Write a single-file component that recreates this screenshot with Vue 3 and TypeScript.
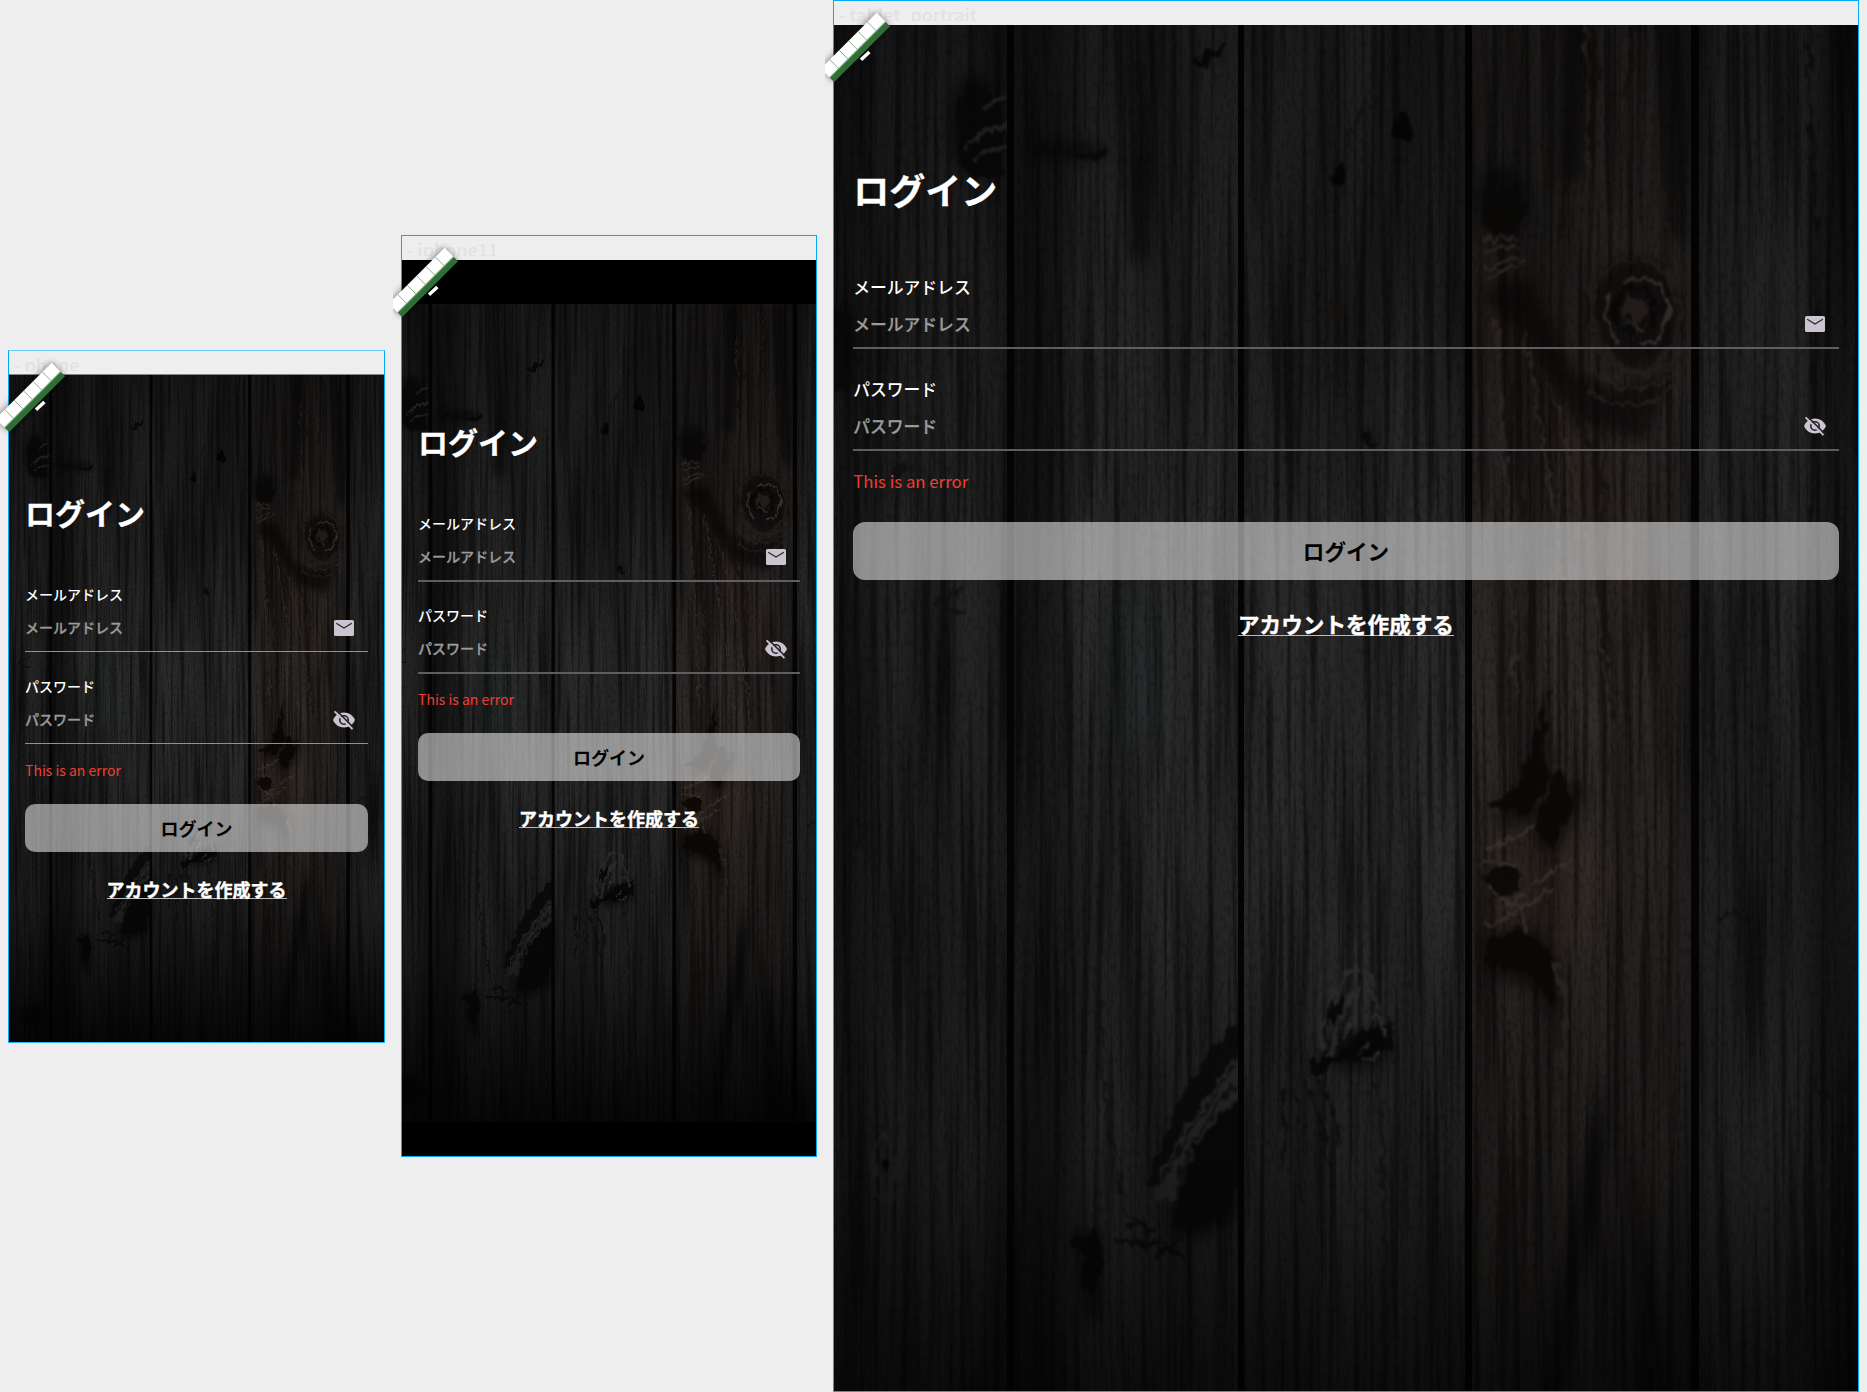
<script setup lang="ts">
interface Device {
  id: string
  name: string
}

const devices: Device[] = [
  { id: 'phone', name: 'phone' },
  { id: 'iphone11', name: 'iphone11' },
  { id: 'tablet', name: 'tablet_portrait' },
]
</script>

<template>
  <main class="board">
    <section v-for="d in devices" :key="d.id" class="frame" :class="d.id">
      <header class="caption"><span>- {{ d.name }}</span></header>

      <div class="safe-area">
        <div class="screen">
          <svg class="wood" viewBox="0 0 1024 1536" preserveAspectRatio="xMidYMid slice" aria-hidden="true">
            <defs>
              <filter :id="'fine-' + d.id" x="0" y="0" width="100%" height="100%" color-interpolation-filters="sRGB">
                <feTurbulence type="fractalNoise" baseFrequency="0.15 0.0035" numOctaves="3" seed="7" />
                <feColorMatrix values="0 0 0 0 0  0 0 0 0 0  0 0 0 0 0  -3.6 0 0 0 2.05" />
              </filter>
              <filter :id="'broad-' + d.id" x="0" y="0" width="100%" height="100%" color-interpolation-filters="sRGB">
                <feTurbulence type="fractalNoise" baseFrequency="0.018 0.0018" numOctaves="2" seed="21" />
                <feColorMatrix values="0 0 0 0 0  0 0 0 0 0  0 0 0 0 0  0 -3 0 0 1.8" />
              </filter>
              <filter :id="'speck-' + d.id" x="0" y="0" width="100%" height="100%" color-interpolation-filters="sRGB">
                <feTurbulence type="fractalNoise" baseFrequency="0.3 0.12" numOctaves="2" seed="3" />
                <feColorMatrix values="0 0 0 0 0  0 0 0 0 0  0 0 0 0 0  -3 0 0 0 1.6" />
              </filter>
              <filter :id="'rough-' + d.id" x="-5%" y="-5%" width="110%" height="110%" color-interpolation-filters="sRGB">
                <feTurbulence type="fractalNoise" baseFrequency="0.11 0.05" numOctaves="4" seed="4" result="n" />
                <feDisplacementMap in="SourceGraphic" in2="n" scale="17" xChannelSelector="R" yChannelSelector="G" />
                <feGaussianBlur stdDeviation="1.2" />
              </filter>
              <filter :id="'haze-' + d.id" x="-20%" y="-20%" width="140%" height="140%" color-interpolation-filters="sRGB">
                <feGaussianBlur stdDeviation="7" />
              </filter>
              <filter :id="'soft-' + d.id" x="-20%" y="-20%" width="140%" height="140%" color-interpolation-filters="sRGB">
                <feGaussianBlur stdDeviation="14" />
              </filter>
              <linearGradient :id="'shade-' + d.id" x1="0" y1="0" x2="0" y2="1">
                <stop offset="0" stop-color="#000" stop-opacity="0.4" />
                <stop offset="0.42" stop-color="#000" stop-opacity="0" />
                <stop offset="0.6" stop-color="#000" stop-opacity="0" />
                <stop offset="0.8" stop-color="#000" stop-opacity="0.28" />
                <stop offset="1" stop-color="#000" stop-opacity="0.82" />
              </linearGradient>
            </defs>

            <!-- planks -->
            <rect width="1024" height="1536" fill="#2a2a2a" />
            <rect width="176" height="1536" fill="#242424" />
            <rect x="634" width="228" height="1536" fill="#2b2826" />
            <g :filter="`url(#soft-${d.id})`">
              <rect x="170" y="0" width="60" height="1536" fill="#181818" />
              <rect x="-20" y="0" width="50" height="1536" fill="#1a1a1a" />
              <rect x="985" y="0" width="60" height="1536" fill="#181818" />
              <path d="M280 660h40l10 140h-50z" fill="#2b3030" />
              <path d="M640 290q90 60 120 170t80 200h-70q-60-160-130-250z" fill="#2e2622" />
              <path d="M700 640h60l20 160h-70z" fill="#34312e" />
              <path d="M645 880l90-10 50 60-20 60-60 60-60-50z" fill="#332a25" />
              <path d="M485 960l40 0 40 110-60 60-40-40z" fill="#303030" />
            </g>

            <!-- grain -->
            <rect width="1024" height="1536" :filter="`url(#broad-${d.id})`" opacity="0.3" />
            <rect width="1024" height="1536" :filter="`url(#fine-${d.id})`" opacity="0.45" />
            <rect width="1024" height="1536" :filter="`url(#speck-${d.id})`" opacity="0.22" />

            <!-- darkened wood around the knots -->
            <g :filter="`url(#haze-${d.id})`" fill="#060505" opacity="0.62">
              <ellipse cx="140" cy="185" rx="26" ry="52" />
              <ellipse cx="232" cy="210" rx="40" ry="9" />
              <path d="M300 210h14v110h-18z" />
              <ellipse cx="668" cy="262" rx="26" ry="36" />
              <path d="M646 352l50-14 40 90 40 20 60-14-24 70-70-24-56-90z" />
              <ellipse cx="801" cy="374" rx="46" ry="58" />
              <path d="M730 0h24l-6 240h-24zM820 0h20l10 300h-16z" />
              <path d="M712 750l-24 98-30 34 50 0 34-46 12 14-30 60-24 0z" />
              <path d="M650 1000l40-20 34 40 4 80-24-50-50-14z" />
              <path d="M778 1130q0 130-34 220l-22 170h-16q14-220 72-390z" />
              <path d="M800 1200q20 150 50 336h-40q-12-150-10-336z" />
              <ellipse cx="520" cy="1110" rx="34" ry="20" />
              <path d="M406 1150v128l-44 24-30-10 14-60q20-50 60-82z" />
              <path d="M240 1290h28v90h-16z" />
              <ellipse cx="136" cy="1475" rx="34" ry="26" />
              <ellipse cx="10" cy="400" rx="14" ry="40" />
            </g>

            <!-- knots and cracks -->
            <g :filter="`url(#rough-${d.id})`" opacity="0.92">
              <path d="M138 138q24 20 34 56v40q-26 12-45-8-18-48 11-88z" fill="#0a0a0a" />
              <path d="M134 208q16-20 42-21M138 218q18-12 38-8M150 196l26-14M152 168q10-10 24-12" fill="none" stroke="#2e2e2e" stroke-width="4" />
              <path d="M190 208q20-8 34 2t50-4l-4 14q-18 0-34-6z" fill="#0a0a0a" />
              <path d="M304 120q8 40 2 80t0 90" fill="none" stroke="#101010" stroke-width="4" />
              <path d="M358 126q14-18 32-22l-18 24z" fill="#080808" />
              <ellipse cx="570" cy="187" rx="9" ry="14" fill="#060505" />
              <ellipse cx="505" cy="234" rx="8" ry="14" fill="#060505" />
              <path d="M512 225q4-60 36-66M506 250q-8 120-2 220" fill="none" stroke="#191512" stroke-width="2.500" />
              <path d="M0 365l16 10-6 40 10 30-20 6z" fill="#0a0a0a" />
              <ellipse cx="63" cy="529" rx="11" ry="7" fill="#101010" />
              <ellipse cx="63" cy="529" rx="26" ry="24" fill="none" stroke="#181818" stroke-width="3" />
              <path d="M528 500l8-10 2 12 10-2-10 10-8-2z" fill="#0a0a0a" />
              <path d="M104 664l24-14M110 668l22 5" fill="none" stroke="#0d0d0d" stroke-width="3" />

              <path d="M650 250l14 10 6-20 12 24 10 0-8 30-34-2z" fill="#0c0a09" />
              <path d="M650 299h32M652 311l30-4M650 330l34-14M652 340l40-20" stroke="#363230" fill="none" stroke-width="3" />
              <g fill="none">
                <path d="M792 170q-6 100-24 140t-2 90q24 50 66 28t20-90q-32-60-30-158" stroke="#271f1a" stroke-width="4" />
                <ellipse cx="801" cy="374" rx="44" ry="56" stroke="#2a221d" stroke-width="3" />
                <ellipse cx="801" cy="374" rx="34" ry="40" stroke="#15110e" stroke-width="4" />
                <path d="M778 350q-14 26 4 50M790 344q20-14 36 4t0 50q-10 10-22 8" stroke="#3e3935" stroke-width="4" />
                <ellipse cx="801" cy="371" rx="20" ry="22" stroke="#0a0807" stroke-width="4" />
                <ellipse cx="801" cy="369" rx="14" ry="11" fill="#2a2320" />
                <path d="M792 384l20 4M800 380l4 14" stroke="#3a3532" stroke-width="2.500" />
                <path d="M770 420q30 26 66 0M764 434q38 30 80-4M754 450q40 36 98-10" stroke="#2a2521" stroke-width="2.500" />
                <path d="M735 0q10 160-10 300M760 0q6 120-4 220M800 0q4 90-6 160M830 0q20 120 24 240M700 420q30 200 44 330M680 440q16 180 14 300M770 480q-6 160 10 300M720 400q34 120 60 160" stroke="#15110e" stroke-width="3" />
                <path d="M690 390q30 160 56 370M716 440q40 140 60 330M750 60q8 120 0 200M662 380q14 200 20 380" stroke="#342c27" stroke-width="2.500" />
              </g>

              <path d="M712 750l-24 88-34 30 40 6 22-36 16-10 8 36-22 44-16-20 16-50-8-20z" fill="#0a0806" />
              <path d="M648 935l30-10 10 24-30 10zM650 1004l36-20 34 36 2 50-22-34-50-14z" fill="#0b0806" />
              <path d="M650 905q40-6 56-24M648 922l34 4M668 970q40-30 70-50M650 985q30-4 70-40M654 950q30 12 40 40" fill="none" stroke="#3b322c" stroke-width="3" />
              <path d="M720 1020q20 60 6 110" fill="none" stroke="#302a26" stroke-width="3" />
              <path d="M720 1090q-6 80-2 120M790 1140q10 180 40 360M690 1100q-10 200-6 430M676 1080q-8 200-8 450" fill="none" stroke="#1d1815" stroke-width="3" />

              <path d="M486 1112q6-56 34-82M532 1030q10 40 24 62M494 1120q10-50 32-74" stroke="#303030" stroke-width="4" fill="none" />
              <path d="M492 1074q10-18 20-20l-10 34zM500 1116q24-20 34-30l24-4q4 26-6 36l-30 2-22 2-24 16 2-18z" fill="#080707" />
              <path d="M520 1112l16-10M510 1100l10-22M540 1078q16 4 10 20M530 1120l16-4" stroke="#3a3734" stroke-width="3" fill="none" />
              <path d="M470 1140q20 40 24 90M482 1136q18 30 26 70M462 1150q6 50 4 110M446 1140q6 40 2 90" stroke="#0e0e0e" stroke-width="2.500" fill="none" />
              <path d="M544 1140q10 120 4 330" stroke="#1a1410" stroke-width="3" fill="none" />

              <path d="M404 1080v34q-50 56-82 134h-10q30-104 92-168z" fill="#0b0b0b" />
              <path d="M406 1116v40q-50 56-68 104h-20q30-84 88-144z" fill="#2b2b2b" />
              <path d="M400 1128q-46 56-72 118M404 1140q-40 50-60 100" stroke="#111" stroke-width="3" fill="none" />
              <path d="M406 1162v80l-30 48-34-4 4-44q20-50 60-80z" fill="#090909" />
              <path d="M236 1298l30-6 4 20-10 46-10-8 2-32-16-12z" fill="#090909" />
              <path d="M290 1286l30 4M280 1300l50 4 24 14M304 1276l12 34M320 1320l30-24" stroke="#0b0b0b" stroke-width="4" fill="none" />
              <path d="M268 1060q-4 120 28 220M230 1040q-10 120-2 200" stroke="#101010" stroke-width="2.500" fill="none" />
              <ellipse cx="51" cy="1227" rx="5" ry="8" fill="#040404" />
              <path d="M51 1194q-24 34 0 72q24-38 0-72z" fill="none" stroke="#232323" stroke-width="4" />
              <path d="M22 880l10 12-10 12-10-12zM104 890l10 8" fill="none" stroke="#0d0d0d" stroke-width="2.500" />
              <path d="M884 980q14-10 28 0M980 1130q10 40 24 24l20-30M996 900l-6 20M970 0q20 400 6 620" stroke="#0e0e0e" stroke-width="3" fill="none" />
              <path d="M505 1400q10 20 4 30M564 1400q-8 20 2 30" stroke="#262626" stroke-width="5" fill="none" />
            </g>

            <!-- gaps between planks -->
            <g fill="#040404">
              <rect x="173" width="7" height="1536" />
              <rect x="404" width="6" height="1536" />
              <rect x="631" width="7" height="1536" />
              <rect x="857" width="8" height="1536" />
            </g>
            <rect width="1024" height="1536" :fill="`url(#shade-${d.id})`" />
          </svg>

          <form class="login" @submit.prevent>
            <h1>ログイン</h1>

            <div class="field">
              <label>メールアドレス</label>
              <div class="input">
                <span>メールアドレス</span>
                <svg class="icon" viewBox="0 0 24 24">
                  <rect x="2" y="4" width="20" height="16" rx="1.6" fill="#cac4d0" />
                  <path d="M4.200 7.200 12 12l7.800-4.800" fill="none" stroke="#29272b" stroke-width="1.200" />
                </svg>
              </div>
            </div>

            <div class="field">
              <label>パスワード</label>
              <div class="input">
                <span>パスワード</span>
                <svg class="icon" viewBox="0 0 24 24" fill="none">
                  <path d="M12 4.500C7 4.500 2.730 7.610 1 12c1.730 4.390 6 7.500 11 7.500s9.270-3.110 11-7.500c-1.730-4.390-6-7.500-11-7.500z" fill="#cac4d0" />
                  <circle cx="12" cy="12" r="4.200" stroke="#222024" stroke-width="1.600" />
                  <path d="M4.800 2.900 22 20.100" stroke="#222024" stroke-width="1.500" />
                  <path d="M2.600 3.300 20.500 21.200" stroke="#cac4d0" stroke-width="1.900" />
                </svg>
              </div>
            </div>

            <p class="error">This is an error</p>
            <button type="submit">ログイン</button>
            <a class="create">アカウントを作成する</a>
          </form>
        </div>
      </div>

      <div class="badge">
        <svg width="70" height="82" viewBox="0 0 70 82" aria-hidden="true">
          <g transform="translate(51.600 8.800) rotate(135)">
            <g class="strip">
              <rect x="0" y="-19" width="79" height="19" fill="#2f6f35" />
              <rect x="0" y="-12.500" width="79" height="12.500" fill="#fff" />
            </g>
            <path d="M13 -12.500v12.500M26.300 -12.500v12.500M39.600 -12.500v12.500M52.900 -12.500v12.500M66.200 -12.500v12.500" stroke="#7d9a80" stroke-width="0.800" />
          </g>
          <path d="M36 55.700l8.400-7.800" stroke="#fff" stroke-width="3.400" />
        </svg>
      </div>
    </section>
  </main>
</template>

<style>
body {
  background: #eee;
  overflow: hidden;
}
</style>

<style scoped>
.board {
  display: flex;
  align-items: center;
  gap: 16px;
  box-sizing: border-box;
  width: 1867px;
  height: 1392px;
  padding-left: 8px;
  background: #eee;
  font-family: 'Noto Sans CJK JP', 'Noto Sans', sans-serif;
}

.frame {
  --u: 1px;
  position: relative;
  flex: none;
  box-sizing: border-box;
  border: 1px solid #06a9f6;
}

.phone {
  width: 377px;
  height: 693px;
  margin-top: 1px;
  border-top-color: #6cc9f8;
  border-bottom-color: #2fb6f6;
}

.iphone11 {
  width: 416px;
  height: 922px;
}

.tablet {
  --u: 1.2px;
  width: 1026px;
  height: 1392px;
}

.caption {
  height: 24px;
  box-sizing: border-box;
  padding-left: 5px;
}

.caption span {
  display: block;
  height: 20px;
  overflow: hidden;
  color: #e6e0e4;
  font-size: 18px;
  font-weight: 500;
  line-height: 26px;
  white-space: nowrap;
}

.phone .caption {
  border-bottom: 1px solid #858585;
}

.safe-area {
  display: flex;
  flex-direction: column;
  box-sizing: border-box;
  height: calc(100% - 24px);
  background: #000;
}

.iphone11 .safe-area {
  padding: 44px 0 34px;
}

.screen {
  position: relative;
  flex: 1;
  min-height: 0;
  overflow: hidden;
}

.wood {
  position: absolute;
  inset: 0;
  width: 100%;
  height: 100%;
}

.login {
  position: relative;
  display: flex;
  flex-direction: column;
  padding: 119px calc(var(--u) * 16) 0;
}

.tablet .login {
  padding-top: 143px;
}

h1 {
  margin: 0 0 55px;
  height: 36px;
  color: #fff;
  font-size: calc(var(--u) * 30);
  font-weight: 700;
  line-height: 36px;
  -webkit-text-stroke: 0.3px #fff;
}

.tablet h1 {
  height: 43px;
  margin-bottom: 64px;
  line-height: 43px;
}

.field {
  margin-bottom: 25px;
}

.tablet .field {
  margin-bottom: 29px;
}

label {
  display: block;
  height: 19px;
  color: #fff;
  font-size: calc(var(--u) * 14);
  font-weight: 500;
  line-height: 18px;
}

.tablet label {
  height: 25px;
  line-height: 24px;
}

.input {
  display: flex;
  align-items: center;
  justify-content: space-between;
  box-sizing: border-box;
  height: 48px;
  padding-right: 12px;
  border-bottom: 1px solid #938f99;
  color: #9b9b9b;
  font-size: calc(var(--u) * 14);
  font-weight: 500;
  line-height: 20px;
}

.input span {
  height: 22px;
  -webkit-text-stroke: 0.3px #9b9b9b;
}

.tablet .input span {
  height: 20px;
}

.iphone11 .input,
.tablet .input {
  height: 49px;
  margin-bottom: -1px;
  border-bottom: 2px solid #5f5c64;
}

.icon {
  width: 24px;
  height: 24px;
}

.error {
  margin: -9px 0 0;
  height: 21px;
  color: #f03e33;
  font-size: calc(var(--u) * 14);
  line-height: 20px;
}

.tablet .error {
  margin-top: -8px;
  height: 20px;
}

button {
  height: calc(var(--u) * 48);
  margin: 23px 0 0;
  padding: 0;
  border: 0;
  border-radius: calc(var(--u) * 10);
  background: rgba(255, 255, 255, 0.52);
  color: #000;
  font-family: inherit;
  font-size: calc(var(--u) * 18);
  font-weight: 700;
}

.tablet button {
  margin-top: 31px;
}

.create {
  align-self: center;
  height: calc(var(--u) * 16);
  margin-top: calc(var(--u) * 30);
  border-bottom: 1px solid #bbb;
  color: #fff;
  font-size: calc(var(--u) * 18);
  font-weight: 700;
  line-height: calc(var(--u) * 15);
  white-space: nowrap;
  -webkit-text-stroke: 0.4px #fff;
}

.tablet .create {
  line-height: 16px;
}

.badge {
  position: absolute;
  top: -1px;
  left: -9px;
  width: 70px;
  height: 90px;
  overflow: hidden;
}

.badge svg {
  display: block;
  margin-top: 4px;
  overflow: visible;
}

.strip {
  filter: drop-shadow(0 1px 3px rgba(0, 0, 0, 0.45));
}
</style>
